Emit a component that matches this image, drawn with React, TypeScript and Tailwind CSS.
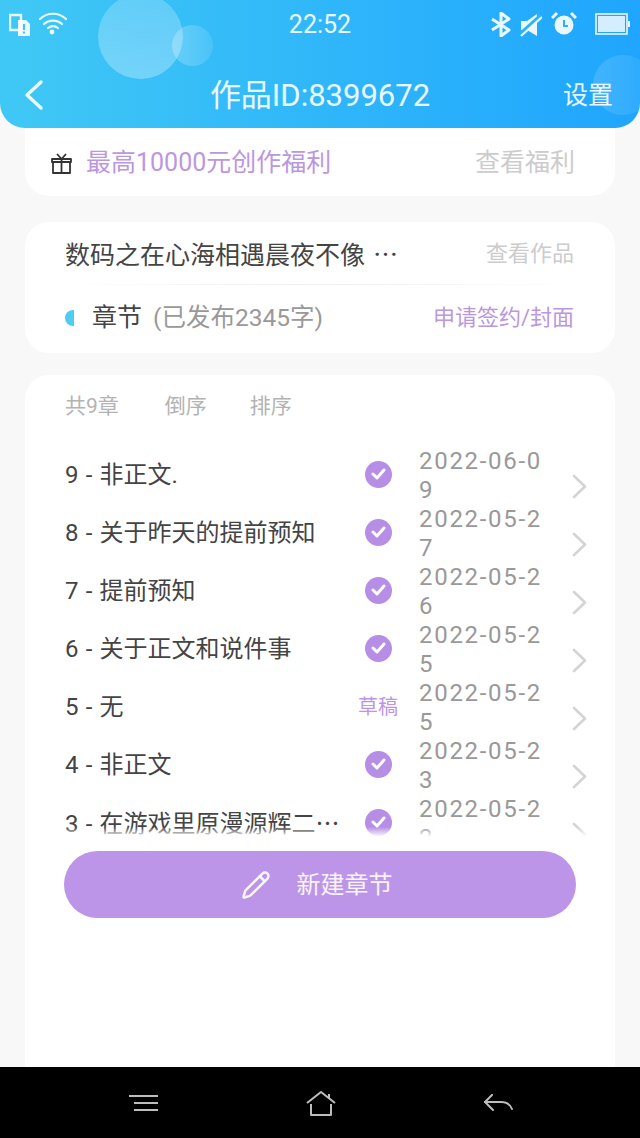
import { Pencil } from "lucide-react";

const CJK = "font-['Roboto','Noto_Sans_CJK_SC',sans-serif]";
const ELLIPSIS = "font-['Noto_Sans_CJK_SC',sans-serif]";

interface Chapter {
  title: string;
  date: string;
  draft?: boolean;
  cut?: boolean;
}

const chapters: Chapter[] = [
  { title: "9 - 非正文.", date: "2022-06-09" },
  { title: "8 - 关于昨天的提前预知", date: "2022-05-27" },
  { title: "7 - 提前预知", date: "2022-05-26" },
  { title: "6 - 关于正文和说件事", date: "2022-05-25" },
  { title: "5 - 无", date: "2022-05-25", draft: true },
  { title: "4 - 非正文", date: "2022-05-23" },
  { title: "3 - 在游戏里原漫源辉二", date: "2022-05-22", cut: true },
];

function StatusBar() {
  return (
    <div className="relative flex h-[48px] items-center justify-between pl-[9px] pr-[10px]">
      <div className="flex items-center gap-[8px] text-white/90">
        {/* sim + wifi */}
        <svg width="22" height="24" viewBox="0 0 22 24" fill="none">
          <path d="M1 3h11l0 15H1z" stroke="currentColor" strokeWidth="2.4" opacity="0.95" />
          <path d="M9 8h8l4 4v12H9z" fill="currentColor" />
          <rect x="14" y="12" width="2" height="6" fill="#3cc5f6" />
          <rect x="14" y="19.5" width="2" height="2" fill="#3cc5f6" />
        </svg>
        <svg width="28" height="24" viewBox="0 0 28 24" fill="none" stroke="currentColor" strokeWidth="2.2" strokeLinecap="round">
          <path d="M1 7c7-7 19-7 26 0" />
          <path d="M5 12c5-4.5 13-4.5 18 0" />
          <path d="M9 16c3-2.3 7-2.3 10 0" />
          <circle cx="13" cy="20" r="2.4" fill="currentColor" stroke="none" />
        </svg>
      </div>
      <span className="absolute left-0 right-0 text-center text-[25px] leading-none text-white/90">22:52</span>
      <div className="flex items-center text-white/90">
        <svg className="mr-[9px]" width="20" height="25" viewBox="0 0 20 25" fill="none" stroke="currentColor" strokeWidth="3" strokeLinejoin="round">
          <path d="M1 7l17 11-8 6V1l8 6L1 18" />
        </svg>
        <svg className="mr-[9px]" width="22" height="25" viewBox="0 0 22 25" fill="currentColor">
          <path d="M1 9h6l10-7v22L7 18H1z" />
          <path d="M0 22L21 3" stroke="#2bb2fa" strokeWidth="3.5" />
          <path d="M1 24L22 5" stroke="currentColor" strokeWidth="2.2" />
        </svg>
        <svg className="mr-[18px]" width="26" height="26" viewBox="0 0 26 26" fill="none">
          <circle cx="13" cy="14" r="9.5" fill="currentColor" />
          <path d="M13 9v6h4" stroke="#2bb2fa" strokeWidth="2" />
          <path d="M1 7l5-5M25 7l-5-5" stroke="currentColor" strokeWidth="3" />
        </svg>
        <svg width="35" height="22" viewBox="0 0 35 22" fill="none">
          <rect x="1" y="1" width="31" height="20" stroke="currentColor" strokeWidth="1.6" />
          <rect x="3" y="3" width="27" height="16" fill="currentColor" opacity="0.9" />
          <rect x="33" y="8" width="2" height="6" fill="currentColor" />
        </svg>
      </div>
    </div>
  );
}

function Header() {
  return (
    <header className="relative z-10 h-[128px] shrink-0 overflow-hidden rounded-b-[25px] bg-gradient-to-r from-[#40c8f5] to-[#1fa5fd]">
      {/* bubbles */}
      <div className="absolute left-[98px] top-[-6px] size-[85px] rounded-full bg-gradient-to-b from-white/20 to-white/30" />
      <div className="absolute left-[172px] top-[25px] size-[41px] rounded-full bg-gradient-to-r from-white/25 to-white/10" />
      <div className="absolute left-[593px] top-[55px] size-[60px] rounded-full bg-gradient-to-r from-white/15 to-white/5" />
      <StatusBar />
      <div className="relative flex h-[80px] items-center justify-between pl-[24px] pr-[27px] pt-[14px] text-white/90">
        <svg width="20" height="32" viewBox="0 0 20 32" fill="none" stroke="currentColor" strokeWidth="3.4" strokeLinecap="round" strokeLinejoin="round">
          <path d="M17 3L3 16l14 13" />
        </svg>
        <span className="absolute left-0 right-0 text-center text-[31px] leading-none">作品ID:8399672</span>
        <span className="text-[25px] leading-none">设置</span>
      </div>
    </header>
  );
}

function Row({ chapter }: { chapter: Chapter }) {
  return (
    <div className="flex h-[58px] items-center">
      <span className="w-[291px] shrink-0 whitespace-nowrap text-[24px] leading-[30px] text-[#444] [word-spacing:1.2px]">
        {chapter.title}
        {chapter.cut && <span className={ELLIPSIS}>…</span>}
      </span>
      <div className="-mt-[2px] flex w-[44px] shrink-0 justify-center">
        {chapter.draft ? (
          <span className="mt-[2px] whitespace-nowrap text-[20px] leading-none text-[#bd94e8]">草稿</span>
        ) : (
          <span className="flex size-[27px] items-center justify-center rounded-full bg-[#b68ee5]">
            <svg width="15" height="12" viewBox="0 0 15 12" fill="none" stroke="white" strokeWidth="3" strokeLinecap="round" strokeLinejoin="round">
              <path d="M2 6l4 4 7-8" />
            </svg>
          </span>
        )}
      </div>
      <span className="ml-[19px] mt-[1px] w-[126px] shrink-0 break-all text-[24px] leading-[29px] tracking-[1.7px] text-[#999]">{chapter.date}</span>
      <svg className="ml-[27px] mt-[23px] shrink-0" width="15" height="25" viewBox="0 0 15 25" fill="none" stroke="#d4d4d4" strokeWidth="2.6" strokeLinecap="round" strokeLinejoin="round">
        <path d="M2 2l11 10.5L2 23" />
      </svg>
    </div>
  );
}

function NavBar() {
  return (
    <nav className="flex h-[71px] shrink-0 items-center bg-black text-[#bdbdbd]">
      <svg className="ml-[129px]" width="29" height="18" viewBox="0 0 29 18" fill="none" stroke="currentColor" strokeWidth="2">
        <path d="M0 2h29M5 9h24M5 16h24" />
      </svg>
      <svg className="ml-[148px]" width="30" height="26" viewBox="0 0 30 26" fill="none" stroke="currentColor" strokeWidth="2" strokeLinejoin="round">
        <path d="M1 13L15 2l14 11" />
        <path d="M5 14v11h20V14" />
        <path d="M23 4v5" />
      </svg>
      <svg className="ml-[148px]" width="29" height="18" viewBox="0 0 29 18" fill="none" stroke="currentColor" strokeWidth="2" strokeLinecap="round" strokeLinejoin="round">
        <path d="M8 1L1 8l8 8" />
        <path d="M1 8h16c5 0 9 2 11 7" />
      </svg>
    </nav>
  );
}

export default function App() {
  return (
    <div className={`flex h-[1138px] w-[640px] flex-col overflow-hidden bg-[#f8f8f8] ${CJK}`}>
      <Header />
      <main className="flex min-h-0 flex-1 flex-col px-[25px]">
        {/* welfare banner */}
        <section className="flex h-[68px] shrink-0 items-center rounded-b-[24px] bg-white pl-[26px] pr-[40px] pt-[2px]">
          <svg width="21" height="21" viewBox="0 0 21 21" fill="none" stroke="#333" strokeWidth="1.8" strokeLinejoin="round">
            <rect x="1" y="6" width="19" height="3" />
            <rect x="2" y="9" width="17" height="11" />
            <path d="M10.5 6v14M10.5 6L6 1M10.5 6L15 1" />
          </svg>
          <span className="ml-[14px] flex-1 text-[25px] leading-[30px] text-[#bb97e0]">最高10000元创作福利</span>
          <span className="text-[25px] leading-[30px] text-[#ccc]">查看福利</span>
        </section>

        {/* work card */}
        <section className="mt-[26px] h-[131px] shrink-0 rounded-[24px] bg-white pl-[40px] pr-[41px]">
          <div className="flex h-[62px] items-center justify-between pt-[2px]">
            <span className="text-[25px] leading-[30px] text-[#444]">
              数码之在心海相遇晨夜不像<span className={`${ELLIPSIS} ml-[8px]`}>…</span>
            </span>
            <span className="text-[22px] leading-[28px] text-[#ccc]">查看作品</span>
          </div>
          <div className="h-px bg-gradient-to-r from-white via-[#eeeeee] to-white" />
          <div className="flex h-[65px] items-center pt-[1px]">
            <span className="h-[16px] w-[9px] rounded-l-full bg-[#4dcdf3]" />
            <span className="ml-[18px] text-[25px] leading-[30px] text-[#444]">章节</span>
            <span className="ml-[11px] flex-1 text-[24.5px] leading-[30px] text-[#999]">(已发布2345字)</span>
            <span className="text-[22px] leading-[28px] text-[#bb97e0]">申请签约/封面</span>
          </div>
        </section>

        {/* chapter list */}
        <section className="mt-[22px] flex min-h-0 flex-1 flex-col rounded-t-[24px] bg-white pl-[40px] pr-[26px]">
          <div className="flex h-[71px] shrink-0 items-center gap-[46px] pb-[9px] text-[21px] leading-[26px] text-[#b3b3b3]">
            <span>共9章</span>
            <span>倒序</span>
            <span className="-ml-[3px]">排序</span>
          </div>
          <div className="relative h-[391px] shrink-0 overflow-hidden">
            {chapters.map((chapter) => (
              <Row key={chapter.title} chapter={chapter} />
            ))}
            <div className="absolute bottom-0 left-0 right-0 h-[10px] bg-gradient-to-b from-white/0 to-white" />
          </div>
          <button className="mt-[14px] flex h-[67px] w-[512px] shrink-0 -translate-x-[1px] items-center justify-center rounded-full bg-[#bd95e8] pr-[7px] text-white/90">
            <Pencil size={30} strokeWidth={2} />
            <span className="ml-[26px] text-[24px] leading-[30px]">新建章节</span>
          </button>
        </section>
      </main>
      <NavBar />
    </div>
  );
}
